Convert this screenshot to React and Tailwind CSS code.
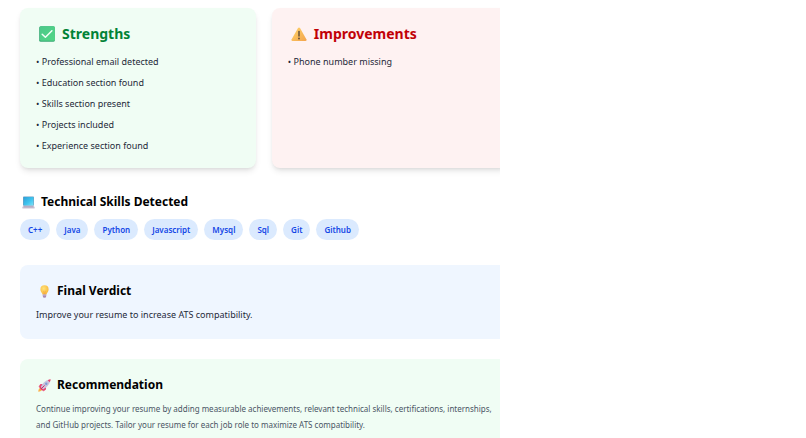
const strengths = [
  'Professional email detected',
  'Education section found',
  'Skills section present',
  'Projects included',
  'Experience section found',
]

const improvements = ['Phone number missing']

const skills = ['C++', 'Java', 'Python', 'Javascript', 'Mysql', 'Sql', 'Git', 'Github']

function CheckIcon() {
  return (
    <svg viewBox="0 0 16 16" className="size-4 shrink-0" aria-hidden="true">
      <defs>
        <linearGradient id="check" x1="0" y1="0" x2="1" y2="1">
          <stop offset="0" stopColor="#4cc88a" />
          <stop offset="1" stopColor="#52d685" />
        </linearGradient>
      </defs>
      <rect x="0.2" y="0.2" width="15.6" height="15.6" rx="1.6" fill="#36a873" />
      <rect x="0.9" y="0.2" width="14.9" height="14.6" rx="1.4" fill="url(#check)" />
      <path d="M3.2 8.2 6.4 11.3 12.9 4.8" fill="none" stroke="#f3fff8" strokeWidth="1.5" strokeLinecap="round" strokeLinejoin="round" />
    </svg>
  )
}

function WarningIcon() {
  return (
    <svg viewBox="0 0 16 16" className="size-4 shrink-0" aria-hidden="true">
      <defs>
        <linearGradient id="warning" x1="0" y1="0" x2="1" y2="1">
          <stop offset="0" stopColor="#ffd56b" />
          <stop offset="1" stopColor="#f3a44c" />
        </linearGradient>
      </defs>
      <path d="M7 2Q8 .8 9 2L15.5 13.4Q16 14.8 14.6 15H1.4Q0 14.8.5 13.4Z" fill="url(#warning)" />
      <path d="M8 5.4v4.6" stroke="#5a4a3a" strokeWidth="1.4" strokeLinecap="round" />
      <circle cx="8" cy="12.5" r="0.9" fill="#5a4a3a" />
    </svg>
  )
}

function LaptopIcon() {
  return (
    <svg viewBox="0 0 13 13" className="size-[13px] shrink-0" aria-hidden="true">
      <defs>
        <linearGradient id="screen" x1="0" y1="0" x2="1" y2="1">
          <stop offset="0" stopColor="#2f9fd8" />
          <stop offset="0.55" stopColor="#3fc4ee" />
          <stop offset="1" stopColor="#7fe3f8" />
        </linearGradient>
      </defs>
      <rect x="1" y="0.4" width="11" height="9.4" rx="0.8" fill="#6f9fc0" />
      <rect x="1.6" y="1" width="9.8" height="8.6" rx="0.3" fill="url(#screen)" />
      <path d="M1.2 9.8h10.6l1 2q.1.8-.7.8H.9q-.8 0-.7-.8Z" fill="#cbc2d4" />
      <path d="M2.1 10.4h8.8l.4.9H1.7Z" fill="#a49cb4" />
    </svg>
  )
}

function BulbIcon() {
  return (
    <svg viewBox="0 0 13 13" className="size-[13px] shrink-0" aria-hidden="true">
      <defs>
        <radialGradient id="bulb" cx="0.4" cy="0.35" r="0.7">
          <stop offset="0" stopColor="#ffe27a" />
          <stop offset="1" stopColor="#f8b436" />
        </radialGradient>
      </defs>
      <path d="M6.5.3a4.1 4.1 0 0 1 4.1 4.1c0 1.9-1.2 2.7-1.8 4.2l-.2 1H4.4l-.2-1C3.6 7.1 2.4 6.3 2.4 4.4A4.1 4.1 0 0 1 6.5.3Z" fill="url(#bulb)" />
      <path d="M5.6 5.8l.6 3.4M7.4 5.8l-.6 3.4" stroke="#f29a3a" strokeWidth="0.5" />
      <path d="M4.8 9.4h3.4v1.8q0 1.5-1.7 1.5t-1.7-1.5Z" fill="#a68ab5" />
      <path d="M4.8 10.5h3.4" stroke="#c7b3cf" strokeWidth="0.6" />
    </svg>
  )
}

function RocketIcon() {
  return (
    <svg viewBox="0 0 13 13" className="size-[13px] shrink-0" aria-hidden="true">
      <path d="M.3 12.7c0-2 .7-3.4 2.2-3.6L4 10.6c-.2 1.4-1.7 2.1-3.7 2.1Z" fill="#fbb04a" />
      <path d="M5.4 4.9 2.5 5.1.5 7.7l3 .3Z" fill="#ea4170" />
      <path d="M8.1 7.6 7.9 10.5l-2.6 2-.3-3Z" fill="#ea4170" />
      <path d="M2.8 7.9C4.5 4.1 7.3 1.5 11 .8L12.2 2C11.5 5.7 8.9 8.5 5.1 10.2Z" fill="#c9c4dc" />
      <path d="M9.7 1.2q1.5-.7 3-.9-.2 1.5-.9 3Z" fill="#e8426c" />
      <circle cx="8.3" cy="4.7" r="1.2" fill="#7d9fd6" />
      <path d="m2.3 7.4 3.3 3.3-1.2 1.1-3.2-3.2Z" fill="#e23c6b" />
      <path d="m3.1 9.9 3.2-3.2" stroke="#c93468" strokeWidth="1" strokeLinecap="round" />
    </svg>
  )
}

function ResultCard({ icon, title, items, cardClass, titleClass }) {
  return (
    <section className={`rounded-lg p-4 shadow-md ${cardClass}`}>
      <h2 className={`flex items-center gap-[7px] pl-[3px] text-[14px] leading-5 font-bold ${titleClass}`}>
        {icon}
        {title}
      </h2>
      <ul className="mt-2.5 -mb-px flex flex-col gap-1.5 text-[9px] leading-[15px] text-gray-800">
        {items.map((item) => (
          <li key={item}>• {item}</li>
        ))}
      </ul>
    </section>
  )
}

function SectionTitle({ icon, children }) {
  return (
    <h2 className="flex items-center gap-1.5 pl-0.5 text-[12px] leading-5 font-bold text-black">
      {icon}
      {children}
    </h2>
  )
}

export default function App() {
  return (
    <div className="min-h-screen overflow-hidden bg-white font-['Noto_Sans','Open_Sans',sans-serif]">
      <main className="max-h-screen w-[62%] overflow-hidden pl-5 pt-2">
        <div className="-mr-2">
          <div className="grid grid-cols-2 gap-4">
            <ResultCard
              icon={<CheckIcon />}
              title="Strengths"
              items={strengths}
              cardClass="bg-green-50"
              titleClass="text-green-700"
            />
            <ResultCard
              icon={<WarningIcon />}
              title="Improvements"
              items={improvements}
              cardClass="bg-red-50"
              titleClass="text-red-700"
            />
          </div>

          <section className="mt-6">
            <SectionTitle icon={<LaptopIcon />}>Technical Skills Detected</SectionTitle>
            <ul className="mt-[7px] flex flex-wrap gap-1.5">
              {skills.map((skill) => (
                <li
                  key={skill}
                  className="rounded-full bg-blue-100 px-2 text-[8px] leading-[21px] font-semibold text-blue-700"
                >
                  {skill}
                </li>
              ))}
            </ul>
          </section>

          <section className="mt-[25px] rounded-lg bg-blue-50 p-4">
            <SectionTitle icon={<BulbIcon />}>Final Verdict</SectionTitle>
            <p className="mt-1.5 text-[9px] leading-4 text-gray-800">
              Improve your resume to increase ATS compatibility.
            </p>
          </section>

          <section className="mt-5 rounded-lg bg-green-50 p-4">
            <SectionTitle icon={<RocketIcon />}>Recommendation</SectionTitle>
            <p className="mt-1.5 text-[8px] leading-4 text-gray-600">
              Continue improving your resume by adding measurable achievements, relevant technical skills,
              certifications, internships, and GitHub projects. Tailor your resume for each job role to
              maximize ATS compatibility.
            </p>
          </section>
        </div>
      </main>
    </div>
  )
}
